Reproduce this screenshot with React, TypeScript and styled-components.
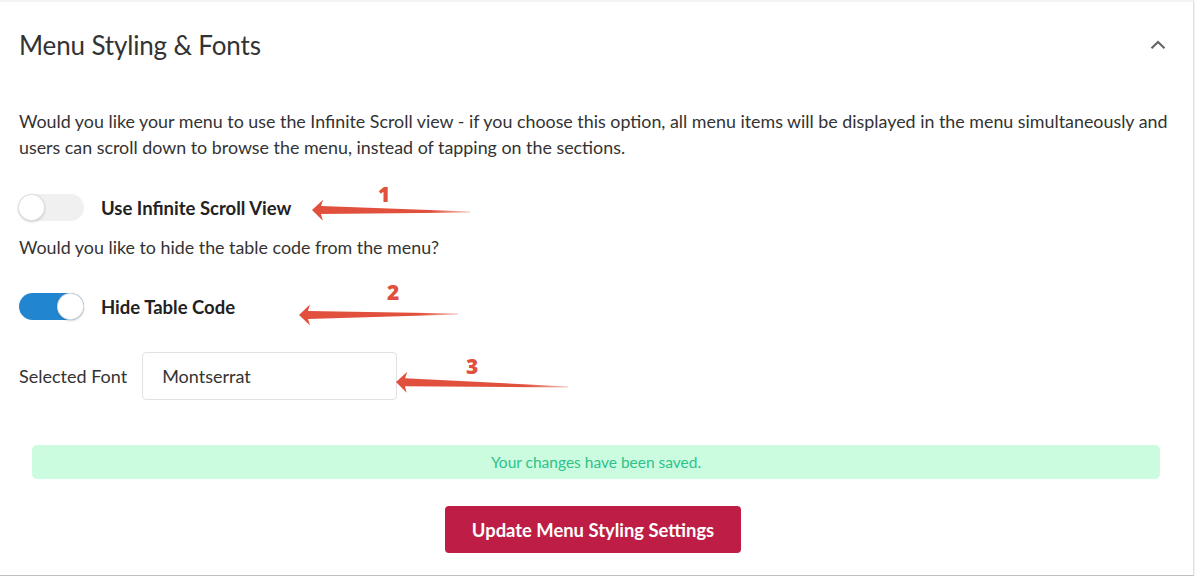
import styled, { createGlobalStyle } from "styled-components";

const GlobalStyle = createGlobalStyle`
  html, body {
    margin: 0;
    padding: 0;
    background: #fff;
  }
  body {
    font-family: Lato, "Open Sans", "Liberation Sans", sans-serif;
    color: #333;
  }
`;

const Card = styled.section`
  position: relative;
  box-sizing: border-box;
  width: 1194px;
  height: 576px;
  padding: 0 19px 22px;
  background: #fff;
  border-top: 2px solid #f3f3f3;
  border-right: 1px solid #e2e2e2;
  border-bottom: 1px solid #bdbdbd;
  box-shadow: 0 1px 2px rgba(0, 0, 0, 0.18);
`;

const Header = styled.header`
  display: flex;
  align-items: center;
  justify-content: space-between;
  height: 86px;
`;

const Title = styled.h2`
  margin: 0;
  font-size: 26px;
  font-weight: 400;
  color: #333;
  letter-spacing: -0.15px;
`;

const Collapse = styled.button`
  display: flex;
  margin-right: 8px;
  padding: 0;
  border: none;
  background: none;
  cursor: pointer;
`;

const Text = styled.p<{ $top: number }>`
  margin: ${(p) => p.$top}px 0 0;
  font-size: 17.85px;
  line-height: 26px;
  color: #333;
`;

const ToggleRow = styled.label<{ $top: number }>`
  display: flex;
  align-items: center;
  margin-top: ${(p) => p.$top}px;
  height: 27px;
  cursor: pointer;
`;

const Track = styled.span<{ $on: boolean }>`
  position: relative;
  display: block;
  width: 65px;
  height: 27px;
  border-radius: 14px;
  background: ${(p) => (p.$on ? "#2185d0" : "#f0f0f0")};
`;

const Knob = styled.span<{ $on: boolean }>`
  position: absolute;
  top: 0;
  left: ${(p) => (p.$on ? "38px" : "-1px")};
  width: 27px;
  height: 27px;
  border-radius: 50%;
  background: #fff;
  box-shadow: 0 1px 2px rgba(34, 36, 38, 0.2),
    inset 0 0 0 1px rgba(34, 36, 38, 0.15);
`;

const ToggleLabel = styled.span`
  margin-left: 17px;
  font-size: 18.5px;
  font-weight: 700;
  color: #222;
`;

const FontRow = styled.div`
  display: flex;
  align-items: center;
  margin-top: 32px;
`;

const FieldLabel = styled.span`
  font-size: 18px;
  color: #333;
  margin-right: 15px;
`;

const Input = styled.input`
  box-sizing: border-box;
  width: 255px;
  height: 48px;
  padding: 0 19px;
  border: 1px solid #e2e2e2;
  border-radius: 4px;
  font-family: inherit;
  font-size: 18px;
  color: #333;
  outline: none;
`;

const Alert = styled.div`
  margin: 45px 14px 0 13px;
  height: 34px;
  display: flex;
  align-items: center;
  justify-content: center;
  border-radius: 5px;
  background: #ccfcdf;
  color: #2cc28b;
  font-size: 15.5px;
`;

const Actions = styled.div`
  display: flex;
  justify-content: center;
  margin-top: 27px;
  padding-right: 7px;
`;

const Submit = styled.button`
  width: 296px;
  height: 47px;
  border: none;
  border-radius: 4px;
  background: #be1e45;
  color: #fff;
  font-family: inherit;
  font-size: 18.4px;
  font-weight: 700;
  cursor: pointer;
`;

const Overlay = styled.svg`
  position: absolute;
  left: 0;
  top: -2px;
  pointer-events: none;
`;

const Marker = styled.span<{ $x: number; $y: number }>`
  position: absolute;
  left: ${(p) => p.$x}px;
  top: ${(p) => p.$y - 2}px;
  font-family: "Open Sans", Lato, sans-serif;
  font-size: 21px;
  font-weight: 800;
  line-height: 1;
  color: #e0503c;
`;

type Pt = [number, number];

function arrowPoints(tip: Pt, tail: Pt) {
  const dx = tail[0] - tip[0];
  const dy = tail[1] - tip[1];
  const len = Math.hypot(dx, dy);
  const ux = dx / len;
  const uy = dy / len;
  const nx = -uy;
  const ny = ux;
  const at = (d: number, w: number): string =>
    `${tip[0] + ux * d + nx * w},${tip[1] + uy * d + ny * w}`;
  return [
    at(0, 0),
    at(11, -10.5),
    at(9, -4),
    at(len, -0.6),
    at(len, 0.6),
    at(9, 4),
    at(11, 10.5),
  ].join(" ");
}

const arrows: { tip: Pt; tail: Pt; n: string; nx: number; ny: number }[] = [
  { tip: [312, 210], tail: [470, 212], n: "1", nx: 378, ny: 184 },
  { tip: [299, 315], tail: [458, 314], n: "2", nx: 387, ny: 282 },
  { tip: [396, 382], tail: [568, 387], n: "3", nx: 466, ny: 356 },
];

function Toggle({ on, label, top }: { on: boolean; label: string; top: number }) {
  return (
    <ToggleRow $top={top}>
      <Track $on={on}>
        <Knob $on={on} />
      </Track>
      <ToggleLabel>{label}</ToggleLabel>
    </ToggleRow>
  );
}

export default function App() {
  return (
    <>
      <GlobalStyle />
      <Card>
        <Header>
          <Title>Menu Styling &amp; Fonts</Title>
          <Collapse aria-label="Collapse">
            <svg width="16" height="10" viewBox="0 0 16 10">
              <path
                d="M1.5 8.2 L8 2 L14.5 8.2"
                fill="none"
                stroke="#666"
                strokeWidth="2.2"
              />
            </svg>
          </Collapse>
        </Header>

        <Text $top={20}>
          Would you like your menu to use the Infinite Scroll view - if you
          choose this option, all menu items will be displayed in the menu
          simultaneously and users can scroll down to browse the menu, instead
          of tapping on the sections.
        </Text>

        <Toggle on={false} label="Use Infinite Scroll View" top={34} />

        <Text $top={13}>Would you like to hide the table code from the menu?</Text>

        <Toggle on={true} label="Hide Table Code" top={33} />

        <FontRow>
          <FieldLabel>Selected Font</FieldLabel>
          <Input defaultValue="Montserrat" />
        </FontRow>

        <Alert>Your changes have been saved.</Alert>

        <Actions>
          <Submit>Update Menu Styling Settings</Submit>
        </Actions>

        <Overlay width="1194" height="580">
          <defs>
            {arrows.map((a, i) => (
              <linearGradient
                key={i}
                id={`fade${i}`}
                gradientUnits="userSpaceOnUse"
                x1={a.tip[0]}
                y1={a.tip[1]}
                x2={a.tail[0]}
                y2={a.tail[1]}
              >
                <stop offset="0" stopColor="#e0503c" />
                <stop offset="0.75" stopColor="#e0503c" />
                <stop offset="1" stopColor="#e0503c" stopOpacity="0.35" />
              </linearGradient>
            ))}
          </defs>
          {arrows.map((a, i) => (
            <polygon key={i} points={arrowPoints(a.tip, a.tail)} fill={`url(#fade${i})`} />
          ))}
        </Overlay>
        {arrows.map((a) => (
          <Marker key={a.n} $x={a.nx} $y={a.ny}>
            {a.n}
          </Marker>
        ))}
      </Card>
    </>
  );
}
